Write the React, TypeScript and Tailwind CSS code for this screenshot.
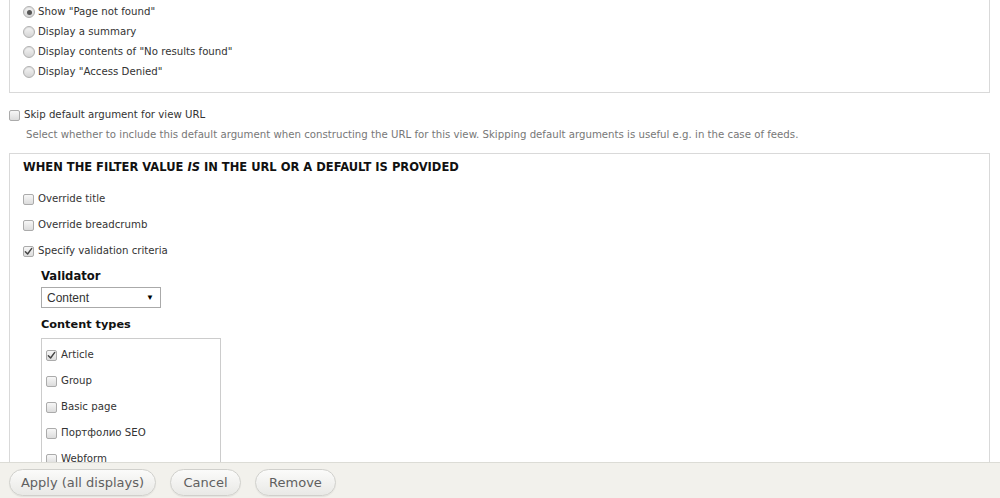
import type React from "react"

const Radio = ({ checked }: { checked?: boolean }) => (
    <span className="relative inline-block w-[12px] h-[12px] shrink-0 rounded-full border border-[#b0b0b0] bg-gradient-to-b from-[#f6f6f6] to-[#d4d4d4] shadow-[inset_0_1px_1px_rgba(0,0,0,0.1)]">
        {checked && <span className="absolute left-[2.5px] top-[2.5px] w-[5px] h-[5px] rounded-full bg-[#555]" />}
    </span>
)

const Checkbox = ({ checked }: { checked?: boolean }) => (
    <span className="relative inline-flex items-center justify-center w-[11px] h-[11px] shrink-0 rounded-[2px] border border-[#ababab] bg-gradient-to-b from-[#f7f7f7] to-[#dcdcdc]">
        {checked && (
            <svg viewBox="0 0 10 10" className="w-[9px] h-[9px]">
                <path d="M1.5 5.2 L4 7.8 L8.6 1.6" fill="none" stroke="#444" strokeWidth="1.6" strokeLinecap="round" strokeLinejoin="round" />
            </svg>
        )}
    </span>
)

const RadioRow = ({ label, checked }: { label: string, checked?: boolean }) => (
    <div className="flex items-center gap-[3px] h-[20px]">
        <Radio checked={checked} />
        <span>{label}</span>
    </div>
)

const CheckRow = ({ label, checked }: { label: string, checked?: boolean }) => (
    <div className="flex items-center gap-[4px] h-[26px]">
        <Checkbox checked={checked} />
        <span>{label}</span>
    </div>
)

const FooterBtn = ({ text, width }: { text: string, width: string }) => (
    <button className={`${width} h-[27px] rounded-full border border-[#d0d0cc] bg-gradient-to-b from-[#fbfbfa] to-[#e9e9e6] text-[13px] text-[#606060] shadow-[0_1px_1px_rgba(0,0,0,0.06)]`}>
        {text}
    </button>
)

const contentTypes: [string, boolean][] = [
    ["Article", true],
    ["Group", false],
    ["Basic page", false],
    ["Портфолио SEO", false],
    ["Webform", false],
]

export default function App() {
    return (
        <div className="h-[498px] flex flex-col overflow-hidden bg-white font-['DejaVu_Sans',sans-serif] text-[10.2px] text-[#333]">
            <div className="flex-1 overflow-hidden pl-[9px] pr-[10px]">
                {/* "No argument" behaviour options */}
                <div className="-mt-[10px] pt-[11px] pb-[10px] pl-[13px] border border-[#d9d9d9]">
                    <RadioRow label={'Show "Page not found"'} checked />
                    <RadioRow label="Display a summary" />
                    <RadioRow label={'Display contents of "No results found"'} />
                    <RadioRow label={'Display "Access Denied"'} />
                </div>

                <div className="mt-[12px] flex items-center gap-[4px] h-[20px]">
                    <Checkbox />
                    <span>Skip default argument for view URL</span>
                </div>
                <div className="h-[20px] flex items-center pl-[17px] text-[10.2px] text-[#777]">
                    Select whether to include this default argument when constructing the URL for this view. Skipping default arguments is useful e.g. in the case of feeds.
                </div>

                <div className="mt-[8px] border border-[#d9d9d9] pl-[13px] pt-[4px] pb-[20px]">
                    <div className="h-[20px] flex items-center font-bold text-[11.5px] text-[#111] uppercase">
                        When the filter value&nbsp;<i>is</i>&nbsp;in the URL or a default is provided
                    </div>
                    <div className="mt-[8px]">
                        <CheckRow label="Override title" />
                        <CheckRow label="Override breadcrumb" />
                        <CheckRow label="Specify validation criteria" checked />
                    </div>

                    <div className="ml-[18px]">
                        <div className="mt-[3px] h-[20px] flex items-center font-bold text-[11.6px] text-[#111]">Validator</div>
                        <div className="w-[120px] h-[21px] border border-[#aaa] bg-white flex items-center justify-between pl-[5px] pr-[6px] font-['Liberation_Sans',sans-serif] text-[12px] text-[#333]">
                            <span>Content</span>
                            <span className="text-[8px] text-black">▼</span>
                        </div>

                        <div className="mt-[7px] h-[20px] flex items-center font-bold text-[11.3px] text-[#111]">Content types</div>
                        <div className="mt-[3px] w-[180px] border border-[#ccc] pl-[4px] pt-[3px]">
                            {contentTypes.map(([name, on]) => (
                                <CheckRow key={name} label={name} checked={on} />
                            ))}
                        </div>
                    </div>
                </div>
            </div>

            <div className="h-[36px] shrink-0 border-t border-[#dcdcd6] bg-[#f2f1ec] pl-[9px] pt-[6px] flex items-start gap-[14px]">
                <FooterBtn text="Apply (all displays)" width="w-[147px]" />
                <FooterBtn text="Cancel" width="w-[71px]" />
                <FooterBtn text="Remove" width="w-[81px]" />
            </div>
        </div>
    )
}
